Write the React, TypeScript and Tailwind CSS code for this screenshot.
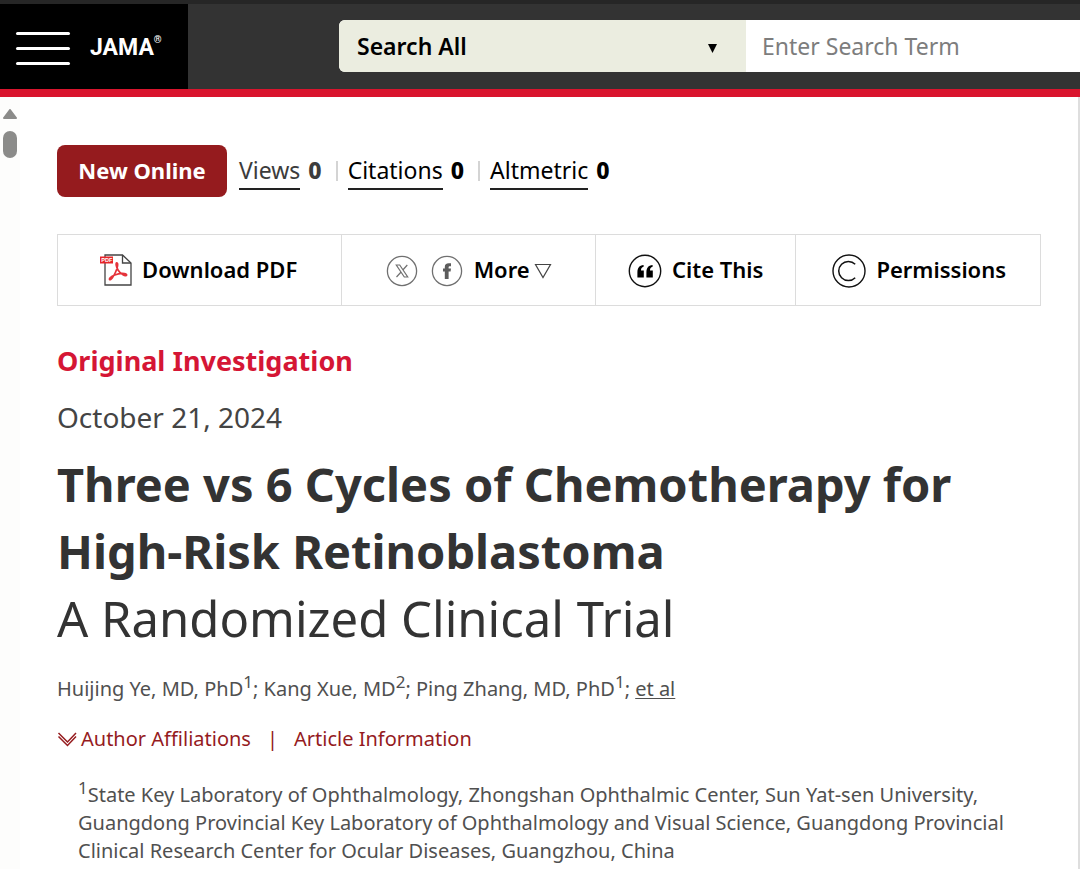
import React from "react";

const affiliations =
  "State Key Laboratory of Ophthalmology, Zhongshan Ophthalmic Center, Sun Yat-sen University, Guangdong Provincial Key Laboratory of Ophthalmology and Visual Science, Guangdong Provincial Clinical Research Center for Ocular Diseases, Guangzhou, China";

function PdfIcon() {
  return (
    <svg width="32" height="32" viewBox="0 0 32 32" fill="none" aria-hidden="true" className="shrink-0">
      <path d="M5 1H22.5L31 9V31H5Z" fill="#fff" stroke="#444" strokeWidth="1.3" />
      <path d="M22.5 1V9H31" stroke="#444" strokeWidth="1.3" />
      <rect x="0" y="2.5" width="13" height="7" fill="#e5252a" />
      <text x="1.2" y="8.2" fontSize="5.6" fontWeight="700" fill="#fff" fontFamily="Liberation Sans, sans-serif">PDF</text>
      <path
        d="M9.5 25.5C9 23.6 13 21 18.5 19.8C23 18.9 27 19.6 26.6 21.2C26 22.9 20.5 20.2 18 16C16 12.6 15.6 9 16.8 8.9C18.4 8.9 17.6 14 15.6 18C13.6 22.4 10.6 26.8 9.5 25.5Z"
        stroke="#e5333a"
        strokeWidth="1.7"
        strokeLinejoin="round"
      />
    </svg>
  );
}

function XIcon() {
  return (
    <svg width="32" height="32" viewBox="0 0 32 32" fill="none" stroke="#707070" aria-hidden="true" className="shrink-0">
      <circle cx="16" cy="16" r="14.6" strokeWidth="1.3" />
      <path d="M10.3 10H13.7L21.7 22H18.3ZM21.3 10L16.8 15M15.1 17L10.5 22" strokeWidth="1.2" />
    </svg>
  );
}

function FacebookIcon() {
  return (
    <svg width="32" height="32" viewBox="0 0 32 32" fill="none" aria-hidden="true" className="shrink-0">
      <circle cx="16" cy="16" r="14.6" stroke="#707070" strokeWidth="1.3" />
      <path d="M13.8 24V16.6H12V13.6H13.8V12C13.8 9.4 15.1 8.2 17.8 8.2H20V11.3H18.8C17.9 11.3 17.6 11.7 17.6 12.5V13.6H20L19.6 16.6H17.6V24Z" fill="#5c5c5c" />
    </svg>
  );
}

function QuoteIcon() {
  return (
    <svg width="34" height="34" viewBox="0 0 34 34" fill="none" aria-hidden="true" className="shrink-0">
      <circle cx="17" cy="17" r="15.7" stroke="#111" strokeWidth="1.4" />
      <path
        d="M15.6 11V12.8C13.8 13.2 13 14.6 13 16.4H15.8V23.6H9.4V18.4C9.4 14 11.2 11.4 15.6 11ZM24.6 11V12.8C22.8 13.2 22 14.6 22 16.4H24.8V23.6H18.4V18.4C18.4 14 20.2 11.4 24.6 11Z"
        fill="#000"
      />
    </svg>
  );
}

function CopyrightIcon() {
  return (
    <svg width="34" height="34" viewBox="0 0 34 34" fill="none" stroke="#111" aria-hidden="true" className="shrink-0">
      <circle cx="17" cy="17" r="16" strokeWidth="1.4" />
      <path d="M23.2 10.3A9.6 9.6 0 1 0 23.2 23.7" strokeWidth="1.5" />
    </svg>
  );
}

function Header() {
  return (
    <header className="border-t-4 border-[#262626] bg-[#333333]">
      <div className="flex h-[85px]">
        <div className="flex h-full w-[188px] shrink-0 items-center gap-5 bg-black pt-1 pl-4">
          <button type="button" aria-label="Open menu" className="flex w-[54px] flex-col gap-3">
            <span className="h-[3px] rounded-full bg-white" />
            <span className="h-[3px] rounded-full bg-white" />
            <span className="h-[3px] rounded-full bg-white" />
          </button>
          <a href="#home" className="flex items-start pb-0.5 font-['Roboto',sans-serif] text-[23px] leading-8 font-bold text-white">
            JAMA<span className="text-[10px] leading-4">®</span>
          </a>
        </div>
        <form className="mt-4 ml-[151px] flex h-[52px] min-w-0 flex-1 overflow-hidden rounded-l-md bg-white">
          <div className="relative w-[407px] shrink-0">
            <select
              aria-label="Search scope"
              className="h-full w-full appearance-none bg-[#ebede0] pl-[18px] text-[23px] font-semibold text-black"
            >
              <option>Search All</option>
            </select>
            <svg width="9" height="9" viewBox="0 0 9 9" aria-hidden="true" className="pointer-events-none absolute top-6 right-[29px]">
              <path d="M0 0H9L4.5 9Z" fill="#000" />
            </svg>
          </div>
          <input
            type="search"
            aria-label="Search term"
            placeholder="Enter Search Term"
            className="min-w-0 flex-1 bg-white pl-4 text-[23px] text-black outline-none placeholder:text-[#7d7d7d]"
          />
        </form>
      </div>
      <div className="h-2 bg-[#d9142d]" />
    </header>
  );
}

function Metrics() {
  return (
    <div className="flex h-[52px] items-center text-[23px] text-black">
      <span className="flex h-full w-[170px] items-center justify-center rounded-lg bg-[#951b1e] pb-0.5 text-[22px] font-bold text-white">
        New Online
      </span>
      <a href="#views" className="ml-3 flex items-start gap-2 leading-9 text-[#3c3c3c]">
        <span className="border-b-2 border-[#222]">Views</span>
        <strong className="font-extrabold">0</strong>
      </a>
      <span className="mr-2.5 ml-3.5 h-5 w-0.5 bg-[#d4d4d4]" />
      <a href="#citations" className="flex items-start gap-2 leading-9">
        <span className="border-b-2 border-[#222]">Citations</span>
        <strong className="font-extrabold">0</strong>
      </a>
      <span className="mr-2.5 ml-3.5 h-5 w-0.5 bg-[#d4d4d4]" />
      <a href="#altmetric" className="flex items-start gap-2 leading-9">
        <span className="border-b-2 border-[#222]">Altmetric</span>
        <strong className="font-extrabold">0</strong>
      </a>
    </div>
  );
}

function Toolbar() {
  return (
    <div className="mt-[37px] grid h-[72px] grid-cols-[285fr_254fr_201fr_244fr] divide-x-1 divide-[#dcdcdc] border border-[#dcdcdc] text-[22px] font-semibold text-black">
      <a href="#pdf" className="flex items-center justify-center gap-2.5 pr-0.5">
        <PdfIcon />
        <span className="pb-0.5">Download PDF</span>
      </a>
      <div className="flex items-center justify-center pt-0.5">
        <button type="button" aria-label="Share on X"><XIcon /></button>
        <button type="button" aria-label="Share on Facebook" className="ml-[13px]"><FacebookIcon /></button>
        <button type="button" className="ml-[11px] flex items-center gap-1">
          <span className="pb-1">More</span>
          <svg width="18" height="16" viewBox="0 0 18 16" fill="none" stroke="#444" aria-hidden="true">
            <path d="M1.5 1.5H16.5L9 14.5Z" strokeWidth="1.2" />
          </svg>
        </button>
      </div>
      <button type="button" className="flex items-center justify-center gap-2.5 pt-0.5">
        <QuoteIcon />
        <span className="pb-1">Cite This</span>
      </button>
      <a href="#permissions" className="flex items-center justify-center gap-2.5 pt-0.5 pl-0.5">
        <CopyrightIcon />
        <span className="pb-1">Permissions</span>
      </a>
    </div>
  );
}

export default function App() {
  return (
    <div className="flex min-h-screen flex-col bg-white font-['Noto_Sans',sans-serif]">
      <Header />
      <div className="flex flex-1">
        <div className="flex w-5 shrink-0 flex-col items-center gap-3 bg-[#fdfdfc] pt-3" aria-hidden="true">
          <svg width="14" height="10" viewBox="0 0 14 10">
            <path d="M7 1L13 9H1Z" fill="#8b8b89" stroke="#8b8b89" strokeWidth="2" strokeLinejoin="round" />
          </svg>
          <div className="h-[27px] w-3.5 rounded-full bg-[#8b8b89]" />
        </div>
        <main className="min-w-0 flex-1 pt-12 pr-[37px] pl-[37px]">
          <Metrics />
          <Toolbar />
          <p className="mt-[35px] text-[27px] leading-10 font-bold text-[#d51635]">Original Investigation</p>
          <p className="mt-[18px] text-[28px] leading-9 text-[#444]">October 21, 2024</p>
          <h1 className="mt-4 text-[#333]">
            <span className="block text-[47px] leading-[67px] font-bold">
              Three vs 6 Cycles of Chemotherapy for
              <br />
              High-Risk Retinoblastoma
            </span>
            <span className="block text-[49px] leading-[66px] font-normal">A Randomized Clinical Trial</span>
          </h1>
          <p className="mt-[22px] text-[20px] leading-8 text-[#505050]">
            Huijing Ye, MD, PhD<sup className="text-[17px]">1</sup>; Kang Xue, MD<sup className="text-[17px]">2</sup>; Ping Zhang, MD, PhD
            <sup className="text-[17px]">1</sup>;{" "}
            <a href="#authors" className="underline decoration-1 underline-offset-2">et al</a>
          </p>
          <div className="mt-[18px] flex items-center text-[20px] leading-8 text-[#951b1e]">
            <a href="#affiliations" className="flex items-center gap-1">
              <svg width="20" height="16" viewBox="0 0 20 16" fill="none" stroke="#951b1e" strokeWidth="1.5" aria-hidden="true">
                <path d="M1.5 2L10.5 11L19 2M1.5 5.5L10.5 14.5L19 5.5" />
              </svg>
              Author Affiliations
            </a>
            <span className="mx-4">|</span>
            <a href="#information">Article Information</a>
          </div>
          <p className="mt-[26px] pl-[21px] text-[20px] leading-7 text-[#505050]">
            <sup className="text-[17px]">1</sup>
            {affiliations}
          </p>
        </main>
        <div className="w-0.5 shrink-0 bg-[#dedede]" />
      </div>
    </div>
  );
}
